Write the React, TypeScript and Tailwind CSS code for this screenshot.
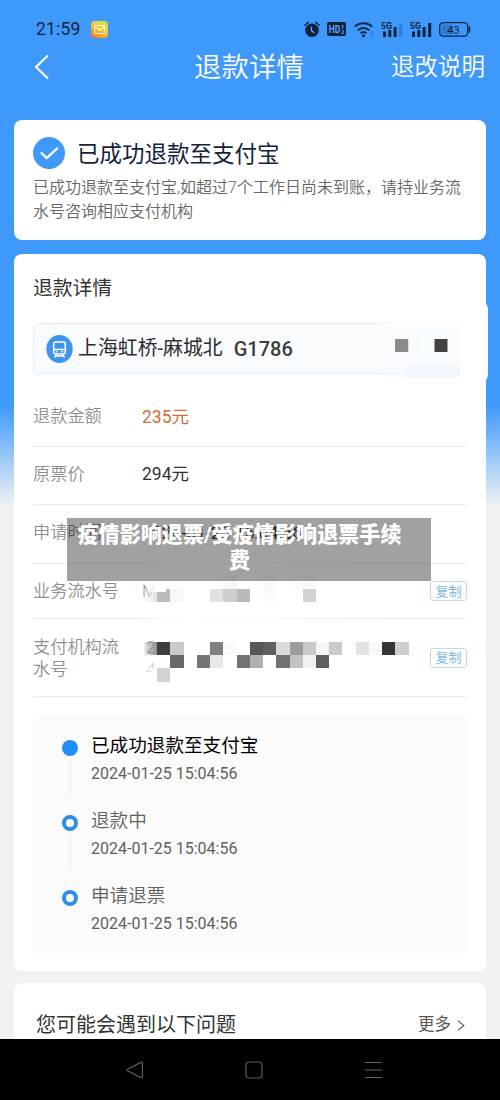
import type { ReactNode } from "react";

interface Cell {
  col: number;
  row: number;
  color: string;
}

interface TimelineItem {
  title: string;
  time: string;
  active?: boolean;
}

const serialCells: Cell[] = [
  { col: 6, row: 0, color: "#f8f8f8" },
  { col: 9, row: 0, color: "#f9f9f9" },
  { col: 11, row: 0, color: "#fcfcfc" },
  { col: 12, row: 0, color: "#f9f9f9" },
  { col: 1, row: 1, color: "#bcbcbc" },
  { col: 2, row: 1, color: "#f8f8f8" },
  { col: 5, row: 1, color: "#e2e2e2" },
  { col: 6, row: 1, color: "#cdcdcd" },
  { col: 7, row: 1, color: "#bababa" },
  { col: 9, row: 1, color: "#fbfbfb" },
  { col: 12, row: 1, color: "#d3d3d3" },
];

const paymentCells: Cell[] = [
  { col: 1, row: 0, color: "#3f3f3f" },
  { col: 2, row: 0, color: "#c9c9c9" },
  { col: 5, row: 0, color: "#808080" },
  { col: 6, row: 0, color: "#fafafa" },
  { col: 8, row: 0, color: "#575757" },
  { col: 9, row: 0, color: "#606060" },
  { col: 10, row: 0, color: "#dadada" },
  { col: 11, row: 0, color: "#9d9d9d" },
  { col: 12, row: 0, color: "#c9c9c9" },
  { col: 13, row: 0, color: "#f5f5f5" },
  { col: 14, row: 0, color: "#cacaca" },
  { col: 16, row: 0, color: "#e2e2e2" },
  { col: 17, row: 0, color: "#f9f9f9" },
  { col: 18, row: 0, color: "#363636" },
  { col: 19, row: 0, color: "#cecece" },
  { col: 2, row: 1, color: "#686868" },
  { col: 4, row: 1, color: "#757575" },
  { col: 5, row: 1, color: "#e8e8e8" },
  { col: 7, row: 1, color: "#737373" },
  { col: 8, row: 1, color: "#b0b0b0" },
  { col: 10, row: 1, color: "#717171" },
  { col: 11, row: 1, color: "#c3c3c3" },
  { col: 12, row: 1, color: "#f0f0f0" },
  { col: 13, row: 1, color: "#5e5e5e" },
  { col: 1, row: 2, color: "#d3d3d3" },
];

const timeline: TimelineItem[] = [
  { title: "已成功退款至支付宝", time: "2024-01-25 15:04:56", active: true },
  { title: "退款中", time: "2024-01-25 15:04:56" },
  { title: "申请退票", time: "2024-01-25 15:04:56" },
];

// Masks a private number with coloured blocks
function Mosaic({ cells, fade }: { cells: Cell[]; fade: string }) {
  return (
    <svg width="266" height="40" viewBox="0 0 266 40" shapeRendering="crispEdges">
      <defs>
        <linearGradient id={`fade${fade.slice(1)}`}>
          <stop offset="0" stopColor={fade} stopOpacity="0.15" />
          <stop offset="1" stopColor={fade} />
        </linearGradient>
      </defs>
      <rect
        x="0"
        y={cells === serialCells ? 13.2 : 0}
        width="13.2"
        height="13.2"
        fill={`url(#fade${fade.slice(1)})`}
      />
      {cells.map((c) => (
        <rect
          key={`${c.col}-${c.row}`}
          x={c.col * 13.23}
          y={c.row * 13.23}
          width="13.23"
          height="13.23"
          fill={c.color}
        />
      ))}
    </svg>
  );
}

function Signal({ weak }: { weak?: boolean }) {
  return (
    <svg width="23" height="17" viewBox="0 0 23 17" fill="#0c2340">
      <text x="0" y="7.6" fontSize="9.2" fontWeight="700" textLength="11" lengthAdjust="spacingAndGlyphs">
        5G
      </text>
      <rect x="2" y="10.5" width="3" height="5.5" rx="0.6" />
      <rect x="7.3" y="9" width="3" height="7" rx="0.6" />
      <rect x="12.6" y="6" width="3" height="10" rx="0.6" />
      <rect x="18.2" y="2" width="3" height="14" rx="0.6" fill={weak ? "#2c7fdc" : "#0c2340"} />
    </svg>
  );
}

function StatusBar() {
  return (
    <div className="flex h-11 items-center pt-[14px] pl-9 text-[#0c2340]">
      <span className="mt-[2px] w-[55px] text-[17.5px] leading-none tracking-[0.2px]">21:59</span>
      <svg width="17" height="17" viewBox="0 0 17 17" fill="none">
        <defs>
          <linearGradient id="mail" x1="0.8" y1="0" x2="0.2" y2="1">
            <stop offset="0" stopColor="#cfe24a" />
            <stop offset="0.45" stopColor="#f8c832" />
            <stop offset="1" stopColor="#f37a2c" />
          </linearGradient>
        </defs>
        <rect width="17" height="17" rx="4" fill="url(#mail)" />
        <rect x="3.7" y="4.5" width="10" height="8" rx="0.8" stroke="#fffbd8" strokeWidth="1.1" />
        <path d="M4 5.6l4.7 3.6 4.7-3.6" stroke="#fffbd8" strokeWidth="1.1" />
      </svg>
      <div className="ml-[196px] flex items-center">
        <svg width="16" height="17" viewBox="0 0 16 17" fill="none" stroke="#0c2340">
          <circle cx="8" cy="9.2" r="6.8" fill="#0c2340" stroke="none" />
          <path d="M.9 4.3L4.2 1.2M15.1 4.3L11.8 1.2" strokeWidth="1.5" strokeLinecap="round" />
          <path d="M7.5 6.2v3.6l2.400 1.800" stroke="#6fb3ff" strokeWidth="1.2" strokeLinecap="round" />
        </svg>
        <svg className="ml-[7px]" width="19" height="14" viewBox="0 0 19 14">
          <rect width="19" height="14" rx="2" fill="#0c2340" />
          <text x="1.8" y="10.9" fontSize="10.5" fontWeight="700" fill="#5ea8fb" textLength="11.5" lengthAdjust="spacingAndGlyphs">
            HD
          </text>
          <text x="14" y="6.6" fontSize="6" fontWeight="700" fill="#5ea8fb">1</text>
          <text x="14" y="12.4" fontSize="6" fontWeight="700" fill="#5ea8fb">2</text>
        </svg>
        <svg className="ml-2" width="21" height="17" viewBox="0 0 21 17" fill="none" stroke="#0c2340" strokeWidth="2">
          <path d="M.9 5.8a12.4 12.4 0 0 1 17.2 0" />
          <path d="M3.8 9.2a8.2 8.2 0 0 1 11.4 0" />
          <path d="M6.6 12.3a4.2 4.2 0 0 1 5.8 0" />
          <circle cx="9.5" cy="14.8" r="1.5" fill="#0c2340" stroke="none" />
          <path d="M16 12l2-2.6 2 2.6zM16 13.4l2 2.6 2-2.6z" fill="#2c7fdc" stroke="none" />
        </svg>
        <div className="ml-[6px] flex">
          <Signal weak />
        </div>
        <div className="ml-[6px] flex">
          <Signal />
        </div>
        <svg className="ml-[6px]" width="32" height="15" viewBox="0 0 32 15">
          <rect x="0.7" y="0.7" width="28" height="13.4" rx="3.6" fill="none" stroke="#0c2340" strokeWidth="1.3" />
          <rect x="2.4" y="2.4" width="11" height="10" rx="2" fill="#2a7ad6" />
          <path d="M30.4 5v5" stroke="#0c2340" strokeWidth="1.6" strokeLinecap="round" />
          <text x="8.3" y="11.5" fontSize="11.5" fill="#0c2340" textLength="12.5">43</text>
        </svg>
      </div>
    </div>
  );
}

function Row({ label, className, children }: { label: string; className: string; children: ReactNode }) {
  return (
    <div className={`relative flex items-center border-b border-[#ebebeb] ${className}`}>
      <span className="w-[109px] shrink-0 pr-5 text-[17.2px] leading-[22px] font-[350] text-[#8f8f8f]">{label}</span>
      {children}
    </div>
  );
}

// Hides the middle part of a row's divider
function DividerFade() {
  return (
    <div className="absolute -bottom-px left-[100px] h-px w-[260px] bg-linear-to-r from-white/0 via-white via-20% to-white/0" />
  );
}

function CopyButton() {
  return (
    <button className="ml-auto flex h-5 w-[37px] items-center justify-center rounded-[3px] border border-[#b9dcf5] text-[13px] leading-none text-[#7db8e4]">
      复制
    </button>
  );
}

export default function App() {
  return (
    <div className="relative flex h-[1100px] w-[500px] flex-col overflow-hidden bg-[#f2f2f2] bg-[linear-gradient(to_bottom,#3f99fa_0px,#3f99fa_405px,#7ab8fb_440px,#c3dcf7_480px,#f2f2f2_508px)] font-['Roboto','Noto_Sans_CJK_SC',sans-serif]">
      <StatusBar />
      <header className="flex h-[46px] items-center justify-between pr-[15px] pl-[34px] text-white">
        <svg width="16" height="26" viewBox="0 0 16 26" fill="none" stroke="#fff" strokeWidth="2.2">
          <path d="M14 1.5L2 13l12 11.5" />
        </svg>
        <h1 className="mt-[2px] ml-[144px] text-[27.5px] leading-none font-[350]">退款详情</h1>
        <span className="mt-px ml-auto text-[23.5px] leading-none font-[350]">退改说明</span>
      </header>

      {/* Refund result */}
      <section className="mx-[14px] mt-[30px] h-[120px] rounded-lg bg-white px-[19px] pt-[17px]">
        <div className="flex items-center">
          <svg width="32" height="32" viewBox="0 0 32 32" fill="none">
            <circle cx="16" cy="16" r="16" fill="#3f99fa" />
            <path d="M8.5 16l5.2 5.2L24 11.5" stroke="#fff" strokeWidth="2.4" strokeLinecap="round" strokeLinejoin="round" />
          </svg>
          <h2 className="mt-[2px] ml-3 text-[22.5px] leading-none text-[#14233c]">已成功退款至支付宝</h2>
        </div>
        <p className="mt-[7px] w-[440px] text-[16px] leading-6 font-[350] text-[#666]">
          已成功退款至支付宝,如超过7个工作日尚未到账，请持业务流
          <br />
          水号咨询相应支付机构
        </p>
      </section>

      {/* Refund details */}
      <section className="relative mx-[14px] mt-[14px] h-[717px] rounded-lg bg-white px-[19px]">
        <div className="absolute top-[48px] -right-[1.5px] h-[80px] w-3 rounded-[100%/20%] bg-white" />
        <h3 className="flex h-[69px] items-center text-[19.8px] leading-none text-[#333]">退款详情</h3>
        <div className="relative flex h-[51px] items-center rounded-[5px] border border-[#e3edf3] bg-[#f9fcff] pl-3">
          <svg width="27" height="28" viewBox="0 0 27 28" fill="none">
            <ellipse cx="13.5" cy="14" rx="13.2" ry="14" fill="#3f95ee" />
            <rect x="7.7" y="7" width="11.6" height="12" rx="2" stroke="#fff" strokeWidth="1.5" />
            <path d="M8 14.5h11M10.5 19.5L8.5 22.5M16.5 19.5L18.5 22.5M9 21h9" stroke="#fff" strokeWidth="1.4" />
            <path d="M10 16.8h1.6M15.4 16.8h1.6" stroke="#fff" strokeWidth="1.4" />
          </svg>
          <span className="ml-[5px] text-[19.9px] leading-none text-[#2c2c2c]">上海虹桥-麻城北</span>
          <span className="ml-[11px] text-[20px] leading-none font-medium text-[#3c3c3c]">G1786</span>
          <svg className="absolute -top-px right-[-5px]" width="96" height="56" viewBox="0 0 96 56">
            <defs>
              <linearGradient id="edge">
                <stop offset="0" stopColor="#f9fcff" stopOpacity="0" />
                <stop offset="0.35" stopColor="#f9fcff" />
              </linearGradient>
              <linearGradient id="smear">
                <stop offset="0.1" stopColor="#f3f7fe" stopOpacity="0" />
                <stop offset="0.45" stopColor="#f3f7fe" />
              </linearGradient>
              <linearGradient id="top">
                <stop offset="0" stopColor="#fff" stopOpacity="0" />
                <stop offset="0.5" stopColor="#fff" />
              </linearGradient>
            </defs>
            <path d="M0 0h96v51H0z" fill="url(#edge)" />
            <path d="M0 42h85v13H0z" fill="url(#smear)" />
            <path d="M0 0h96v3H0z" fill="url(#top)" />
            <path d="M85 0h11v56H85z" fill="#fff" />
            <path d="M20 16h13.500v13H20z" fill="#8b8b8b" />
            <path d="M33.500 16h12v13h-12z" fill="#f5fafc" />
            <path d="M59.500 16h13v13h-13z" fill="#434343" />
          </svg>
        </div>

        <Row label="退款金额" className="h-[73px] pt-3">
          <span className="mt-[3px] text-[17.5px] leading-none text-[#cf6f35]">235元</span>
        </Row>
        <Row label="原票价" className="h-[58px] pb-1">
          <span className="mt-[3px] text-[17.5px] leading-none text-[#333]">294元</span>
        </Row>
        <Row label="申请时间" className="h-[59px] pb-1">
          <span className="mt-[3px] text-[17.5px] leading-none text-[#333]">2024-01-25 15:04:56</span>
          <DividerFade />
        </Row>
        <Row label="业务流水号" className="h-[55px]">
          <span className="text-[17px] leading-none font-light text-[#999]">M</span>
          <div className="absolute top-[12px] left-[111px]">
            <Mosaic cells={serialCells} fade="#e6e6e6" />
          </div>
          <div className="absolute top-[14px] left-[113px] h-[14px] w-5 bg-linear-to-r from-white/0 to-white to-50%" />
          <DividerFade />
          <CopyButton />
        </Row>
        <Row label="支付机构流水号" className="h-[78px]">
          <div className="mr-2 text-[17px] leading-[22px] font-light text-[#888]">
            <p>&nbsp;2</p>
            <p className="text-[#ccc]">&nbsp;4</p>
          </div>
          <div className="absolute top-[49px] left-[113px] h-5 w-3 bg-linear-to-r from-white/0 to-white to-80%" />
          <div className="absolute top-[23px] left-[111px]">
            <Mosaic cells={paymentCells} fade="#8c8c8c" />
          </div>
          <CopyButton />
        </Row>

        {/* Timeline */}
        <ul className="mt-[17px] h-[240px] rounded-lg bg-[#fbfbfb] pt-[20px] pl-[29px]">
          {timeline.map((item, index) => (
            <li key={index} className="flex h-[75px]">
              <div className="flex w-[29px] flex-col items-start pt-[6px]">
                <span
                  className={`h-4 w-4 rounded-full ${
                    item.active ? "bg-[#1e8ffa]" : "border-[4.5px] border-[#2f8fe6] bg-white"
                  }`}
                />
                {index < timeline.length - 1 && <span className="mt-1 ml-[8px] h-9 w-px bg-[#ececec]" />}
              </div>
              <div>
                <p className={`text-[18.6px] leading-6 ${item.active ? "text-black" : "font-[350] text-[#606060]"}`}>
                  {item.title}
                </p>
                <p className="mt-[6px] text-[16px] leading-5 text-[#606060]">{item.time}</p>
              </div>
            </li>
          ))}
        </ul>
      </section>

      {/* FAQ */}
      <section className="mx-[14px] mt-3 flex h-[56px] items-start rounded-t-lg bg-white pt-[32px] pr-[21px] pl-[22px]">
        <h3 className="text-[20px] leading-5 text-[#333]">您可能会遇到以下问题</h3>
        <span className="ml-auto text-[16.5px] leading-5 text-[#555]">更多</span>
        <svg className="mt-[5px] ml-[6px]" width="8" height="11" viewBox="0 0 8 11" fill="none" stroke="#666" strokeWidth="1.2">
          <path d="M1 .8l5.8 4.7L1 10.2" />
        </svg>
      </section>

      <nav className="flex h-[61px] items-center bg-black pl-[126px]">
        <svg width="18" height="18" viewBox="0 0 18 18" fill="none" stroke="#5c5c5c" strokeWidth="1.2">
          <path d="M1.6 8.2L14.8 1.4q1.6-.6 1.6 1v13.2q0 1.600-1.600 1L1.6 9.800q-1-.8 0-1.600z" />
        </svg>
        <svg className="ml-[101px]" width="18" height="18" viewBox="0 0 18 18" fill="none" stroke="#5c5c5c" strokeWidth="1.2">
          <rect x="1" y="1" width="16" height="16" rx="3" />
        </svg>
        <svg className="ml-[102px]" width="17" height="18" viewBox="0 0 17 18" stroke="#666" strokeWidth="1.2">
          <path d="M0 1.500h17M0 9h17M0 16.500h17" />
        </svg>
      </nav>

      {/* Caption */}
      <div className="absolute top-[518px] left-[67px] flex h-[63px] w-[364px] justify-center bg-black/[0.37] pt-[4px] pr-[19px]">
        <p className="text-center text-[21.1px] leading-[26px] font-extrabold whitespace-nowrap text-white">
          疫情影响退票/受疫情影响退票手续
          <br />费
        </p>
      </div>
    </div>
  );
}
